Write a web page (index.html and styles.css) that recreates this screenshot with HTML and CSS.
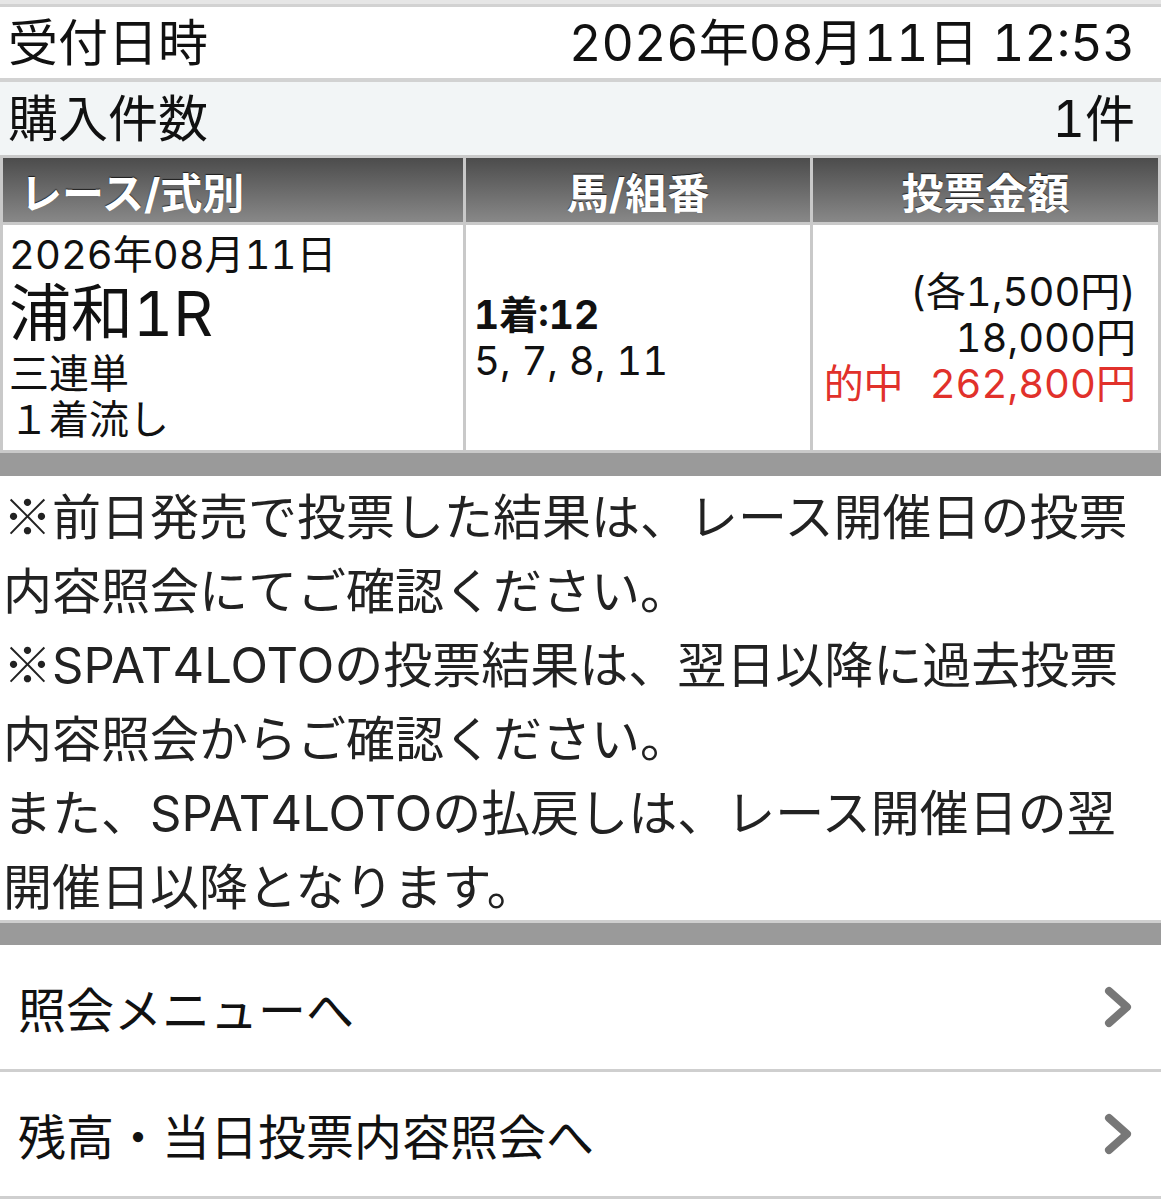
FILE: index.html
```html
<!DOCTYPE html>
<html lang="ja">
<head>
<meta charset="utf-8">
<title>投票内容照会</title>
<link rel="stylesheet" href="styles.css">
</head>
<body>
<div class="topband"></div>
<div class="inforow inforow-white">
  <span class="label">受付日時</span>
  <span class="value">2026年08月11日 12:53</span>
</div>
<div class="inforow inforow-tint">
  <span class="label">購入件数</span>
  <span class="value">1件</span>
</div>
<table class="bets">
  <colgroup>
    <col class="c1">
    <col class="c2">
    <col class="c3">
  </colgroup>
  <thead>
    <tr>
      <th class="left">レース/式別</th>
      <th>馬/組番</th>
      <th>投票金額</th>
    </tr>
  </thead>
  <tbody>
    <tr>
      <td class="race">
        <div class="race-date">2026年08月11日</div>
        <div class="race-name">浦和1R</div>
        <div class="race-type">三連単</div>
        <div class="race-type">１着流し</div>
      </td>
      <td class="nums">
        <div class="first">1着:12</div>
        <div>5, 7, 8, 11</div>
      </td>
      <td class="money">
        <div>(各1,500円)</div>
        <div>18,000円</div>
        <div class="hit"><span class="hit-label">的中</span>262,800円</div>
      </td>
    </tr>
  </tbody>
</table>
<div class="band"></div>
<div class="notes">
  <p><span class="line"><span class="cjk">※</span>前日発売で投票した結果は、レース開催日の投票</span><span class="line">内容照会にてご確認ください。</span></p>
  <p><span class="line"><span class="cjk">※</span>SPAT4LOTOの投票結果は、翌日以降に過去投票</span><span class="line">内容照会からご確認ください。</span><span class="line">また、SPAT4LOTOの払戻しは、レース開催日の翌</span><span class="line">開催日以降となります。</span></p>
</div>
<div class="band band-bottom"></div>
<a class="menu" href="#">
  <span>照会メニューへ</span>
  <svg class="chev" width="30" height="44" viewBox="0 0 30 44"><polyline points="6,6 24,22 6,38" fill="none" stroke="#777" stroke-width="8" stroke-linecap="round" stroke-linejoin="round"/></svg>
</a>
<a class="menu" href="#">
  <span>残高・当日投票内容照会へ</span>
  <svg class="chev" width="30" height="44" viewBox="0 0 30 44"><polyline points="6,6 24,22 6,38" fill="none" stroke="#777" stroke-width="8" stroke-linecap="round" stroke-linejoin="round"/></svg>
</a>
</body>
</html>
```
FILE: styles.css
```css
*, *::before, *::after { box-sizing: border-box; }
html, body {
  margin: 0;
  padding: 0;
  background: #fff;
}
body {
  width: 1161px;
  font-family: Inter, "Noto Sans CJK JP", sans-serif;
  font-variant-numeric: tabular-nums;
  color: #111;
}
.cjk {
  font-family: "Noto Sans CJK JP", sans-serif;
}
.topband {
  height: 7px;
  background: #e6e6e6;
  border-bottom: 3px solid #d2d2d2;
}
.inforow {
  display: flex;
  justify-content: space-between;
  align-items: center;
  padding: 0 26px 0 8px;
  font-size: 50px;
  line-height: 1;
}
.inforow-white {
  height: 75px;
  background: #fff;
  border-bottom: 4px solid #d2d2d2;
}
.inforow-tint {
  height: 73px;
  background: #f2f5f6;
}
.bets {
  width: 1161px;
  border-collapse: separate;
  border-spacing: 3px;
  background: #c9c9c9;
  table-layout: fixed;
}
col.c1 { width: 460px; }
col.c2 { width: 344px; }
col.c3 { width: 345px; }
.bets th {
  height: 64px;
  padding: 0;
  background: linear-gradient(#4c4c4c, #888888);
  color: #fff;
  font-size: 42px;
  font-weight: bold;
  text-shadow: 0 -1px 1px rgba(0,0,0,0.7);
  text-align: center;
  vertical-align: middle;
}
.bets th.left {
  text-align: left;
  padding-left: 17px;
}
.bets td {
  background: #fff;
  height: 225px;
  padding: 0;
  vertical-align: middle;
}
.bets td.race {
  padding: 8px 0 0 6px;
  vertical-align: top;
  font-size: 40px;
  line-height: 44px;
}
.race-name {
  font-size: 62px;
  line-height: 74px;
}
.race-type {
  line-height: 46px;
}
.bets td.nums {
  padding-left: 8px;
  font-size: 40px;
  line-height: 46px;
}
.nums .first {
  font-weight: bold;
  font-size: 39px;
}
.bets td.money {
  text-align: right;
  padding-right: 22px;
  font-size: 40px;
  line-height: 46px;
}
.hit { color: #e1312b; }
.hit-label { margin-right: 26px; }
.band {
  height: 23px;
  background: #9a9a9a;
}
.band-bottom {
  border-top: 3px solid #cfcfcf;
  height: 25px;
}
.notes {
  padding: 0 0 0 3px;
  font-size: 49px;
  color: #222;
  white-space: nowrap;
}
.notes p { margin: 0; }
.notes .line {
  display: flex;
  align-items: center;
  height: 74px;
}
.menu {
  display: flex;
  align-items: center;
  justify-content: space-between;
  height: 127px;
  padding: 0 28px 0 18px;
  border-bottom: 3px solid #cfcfcf;
  color: #111;
  text-decoration: none;
  font-size: 48px;
}
.chev { display: block; }
```
